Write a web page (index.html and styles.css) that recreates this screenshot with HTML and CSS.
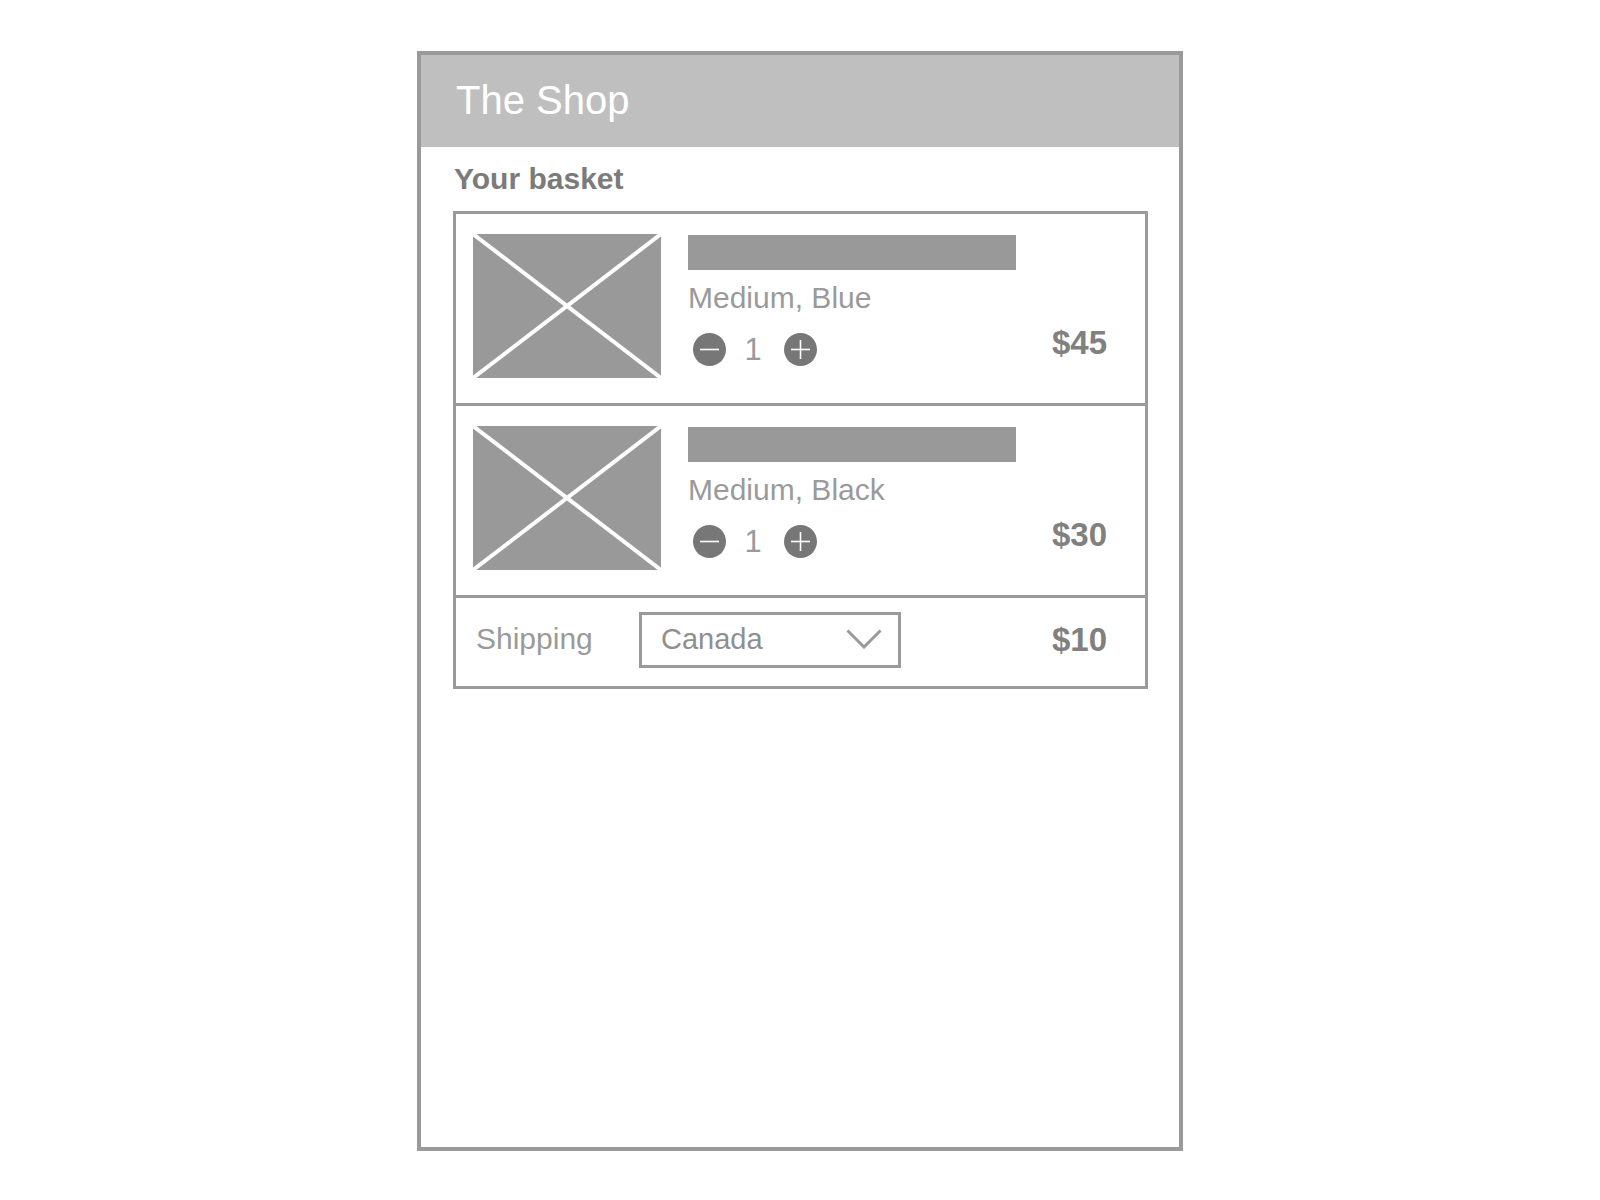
FILE: index.html
```html
<!DOCTYPE html>
<html>
<head>
<meta charset="utf-8">
<title>The Shop</title>
<link rel="stylesheet" href="styles.css">
</head>
<body>
<div class="frame">
  <header class="topbar"><h1 class="brand">The Shop</h1></header>
  <main class="content">
    <h2 class="title">Your basket</h2>
    <section class="basket">
      <div class="item">
        <svg class="thumb" viewBox="0 0 188 144" width="188" height="144">
          <rect x="0" y="0" width="188" height="144" fill="#999999"/>
          <line x1="0" y1="0" x2="188" y2="144" stroke="#ffffff" stroke-width="4"/>
          <line x1="188" y1="0" x2="0" y2="144" stroke="#ffffff" stroke-width="4"/>
        </svg>
        <div class="details">
          <div class="namebar"></div>
          <div class="variant">Medium, Blue</div>
          <div class="qty">
            <svg class="qbtn" viewBox="0 0 33 33" width="33" height="33"><circle cx="16.5" cy="16.5" r="16.5" fill="#777777"/><line x1="7" y1="16.5" x2="26" y2="16.5" stroke="#ffffff" stroke-width="1.6"/></svg>
            <span class="qnum">1</span>
            <svg class="qbtn" viewBox="0 0 33 33" width="33" height="33"><circle cx="16.5" cy="16.5" r="16.5" fill="#777777"/><line x1="7" y1="16.5" x2="26" y2="16.5" stroke="#ffffff" stroke-width="1.6"/><line x1="16.5" y1="7" x2="16.5" y2="26" stroke="#ffffff" stroke-width="1.6"/></svg>
          </div>
        </div>
        <div class="price price-item">$45</div>
      </div>
      <div class="item">
        <svg class="thumb" viewBox="0 0 188 144" width="188" height="144">
          <rect x="0" y="0" width="188" height="144" fill="#999999"/>
          <line x1="0" y1="0" x2="188" y2="144" stroke="#ffffff" stroke-width="4"/>
          <line x1="188" y1="0" x2="0" y2="144" stroke="#ffffff" stroke-width="4"/>
        </svg>
        <div class="details">
          <div class="namebar"></div>
          <div class="variant">Medium, Black</div>
          <div class="qty">
            <svg class="qbtn" viewBox="0 0 33 33" width="33" height="33"><circle cx="16.5" cy="16.5" r="16.5" fill="#777777"/><line x1="7" y1="16.5" x2="26" y2="16.5" stroke="#ffffff" stroke-width="1.6"/></svg>
            <span class="qnum">1</span>
            <svg class="qbtn" viewBox="0 0 33 33" width="33" height="33"><circle cx="16.5" cy="16.5" r="16.5" fill="#777777"/><line x1="7" y1="16.5" x2="26" y2="16.5" stroke="#ffffff" stroke-width="1.6"/><line x1="16.5" y1="7" x2="16.5" y2="26" stroke="#ffffff" stroke-width="1.6"/></svg>
          </div>
        </div>
        <div class="price price-item">$30</div>
      </div>
      <div class="shipping">
        <div class="ship-label">Shipping</div>
        <div class="select">
          <span class="select-value">Canada</span>
          <svg class="chevron" viewBox="0 0 36 20" width="36" height="20"><polyline points="1.5,1.5 18,18 34.5,1.5" fill="none" stroke="#9a9a9a" stroke-width="3"/></svg>
        </div>
        <div class="price price-ship">$10</div>
      </div>
    </section>
  </main>
</div>
</body>
</html>
```
FILE: styles.css
```css
* { box-sizing: border-box; }
html, body { margin: 0; padding: 0; background: #ffffff; }
body { font-family: "Liberation Sans", Arial, sans-serif; }

.frame {
  width: 766px;
  height: 1100px;
  margin: 51px auto 0;
  border: 4px solid #9a9a9a;
  display: flex;
  flex-direction: column;
}

.topbar {
  height: 92px;
  background: #bfbfbf;
  display: flex;
  align-items: center;
  padding: 0 0 3px 35px;
}
.brand {
  margin: 0;
  font-size: 40px;
  font-weight: normal;
  line-height: 46px;
  color: #ffffff;
}

.content { padding: 15px 31px 0 32px; }
.title {
  margin: 0 0 15px 1px;
  font-size: 30px;
  line-height: 34px;
  font-weight: bold;
  color: #7b7b7b;
}

.basket {
  width: 695px;
  border: 3px solid #9a9a9a;
}

.item {
  height: 192px;
  display: flex;
  align-items: flex-start;
  padding: 20px 38px 0 17px;
  border-bottom: 3px solid #9a9a9a;
}
.thumb { display: block; flex: none; }

.details {
  flex: 1;
  margin-left: 27px;
  padding-top: 1px;
}
.namebar {
  width: 328px;
  height: 35px;
  background: #999999;
}
.variant {
  margin-top: 11px;
  font-size: 30px;
  line-height: 34px;
  color: #9a9a9a;
}
.qty {
  margin-top: 18px;
  height: 33px;
  display: flex;
  align-items: center;
  margin-left: 5px;
}
.qbtn { display: block; flex: none; }
.qnum {
  width: 58px;
  text-align: center;
  font-size: 31px;
  line-height: 33px;
  color: #9a9a9a;
  margin-left: -2px;
  margin-right: 2px;
}

.price {
  font-size: 33px;
  font-weight: bold;
  line-height: 38px;
  color: #808080;
}
.price-item { margin-top: 90px; }

.shipping {
  height: 88px;
  display: flex;
  align-items: center;
  padding: 0 38px 0 20px;
}
.ship-label {
  width: 163px;
  font-size: 30px;
  line-height: 34px;
  color: #9a9a9a;
  margin-bottom: 6px;
}
.select {
  width: 262px;
  height: 56px;
  border: 3px solid #9a9a9a;
  display: flex;
  align-items: center;
  justify-content: space-between;
  padding: 0 16px 0 19px;
  margin-bottom: 4px;
}
.select-value {
  font-size: 29px;
  line-height: 34px;
  color: #8f8f8f;
  margin-bottom: 2px;
}
.chevron { display: block; margin-bottom: 3px; }
.price-ship { margin-left: auto; margin-bottom: 5px; }
```
